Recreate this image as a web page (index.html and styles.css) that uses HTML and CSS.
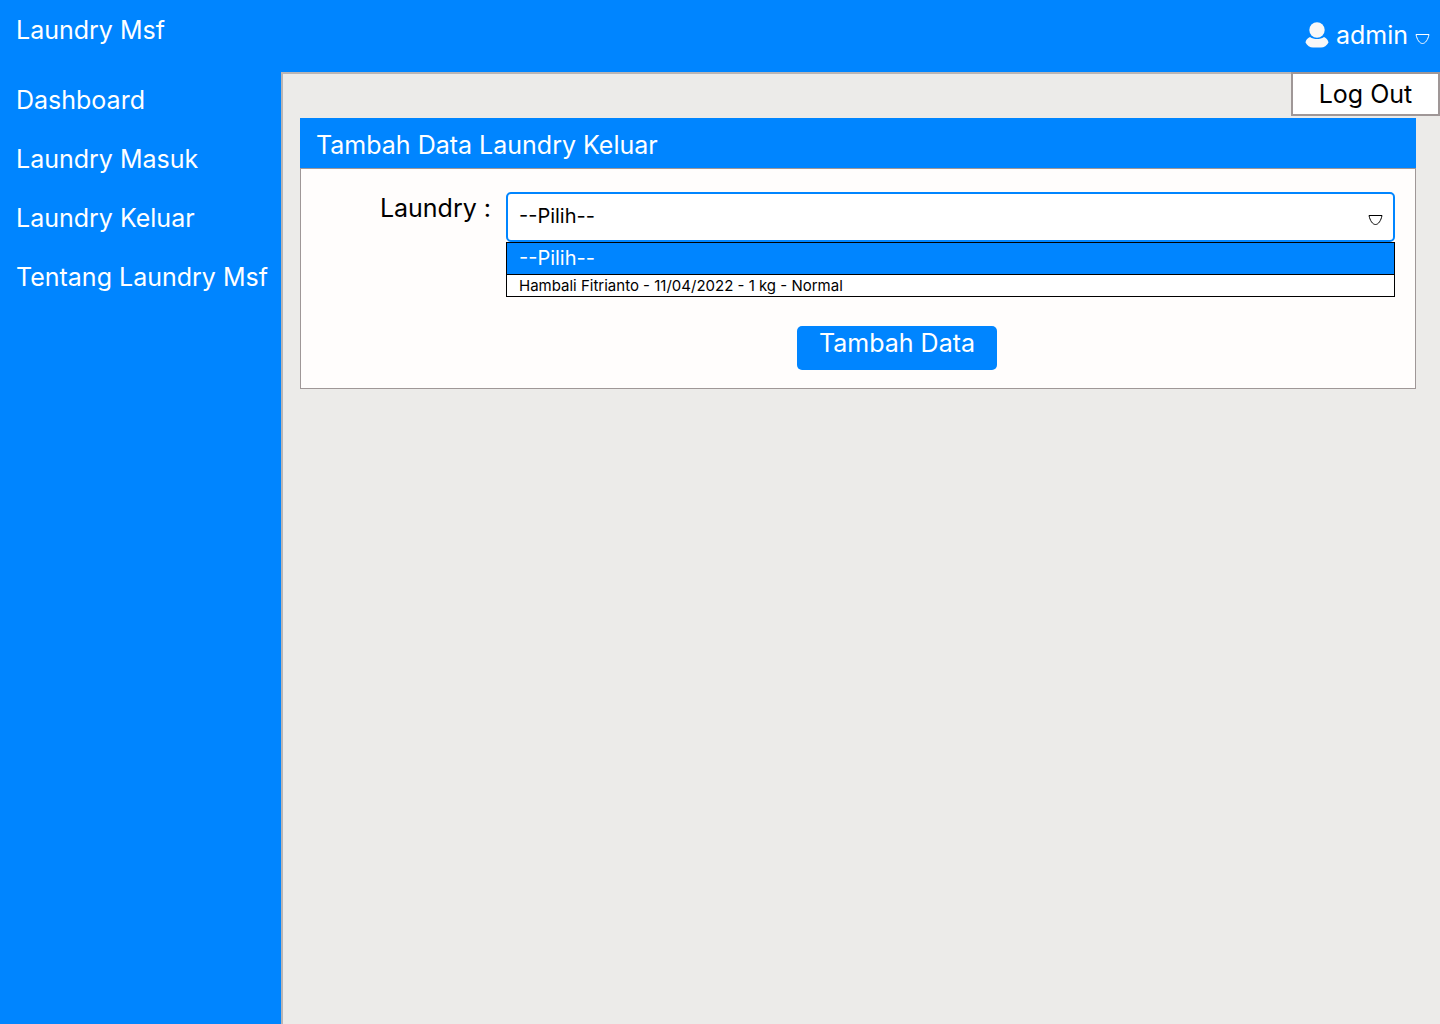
FILE: index.html
```html
<!DOCTYPE html>
<html lang="id">
<head>
  <meta charset="utf-8">
  <meta name="viewport" content="width=device-width, initial-scale=1">
  <title>Laundry Msf</title>
  <link rel="stylesheet" href="styles.css">
</head>
<body>
  <header class="topbar">
    <a class="brand" href="#">Laundry Msf</a>
    <div class="account">
      <button class="account-toggle" type="button" aria-expanded="true">
        <svg class="user-icon" viewBox="0 0 24 26" aria-hidden="true">
          <path d="M5 15C2.500 16 .8 18.200.5 20.500C2 23.500 5 25.500 8 25.500H16C19 25.500 22 23.500 23.500 20.500C23 18.200 21.500 16 19 15C15 17.700 9 17.700 5 15Z"/>
          <circle cx="12" cy="8" r="7.700"/>
        </svg>
        <span class="account-name">admin</span>
        <svg class="caret" viewBox="0 0 15 12" aria-hidden="true">
          <path d="M1 1.500H14C13 6.500 10.500 10.500 7.500 10.500S2 6.500 1 1.500Z"/>
        </svg>
      </button>
      <button class="logout" type="button">Log Out</button>
    </div>
  </header>

  <div class="layout">
    <nav class="sidebar">
      <a href="#">Dashboard</a>
      <a href="#">Laundry Masuk</a>
      <a href="#">Laundry Keluar</a>
      <a href="#">Tentang Laundry Msf</a>
    </nav>

    <main class="content">
      <section class="card">
        <h1 class="card-title">Tambah Data Laundry Keluar</h1>
        <form class="card-body">
          <div class="field">
            <label class="field-label" for="laundry">Laundry :</label>
            <div class="picker">
              <div class="select-box">
                <select class="select" id="laundry">
                  <option>--Pilih--</option>
                  <option>Hambali Fitrianto - 11/04/2022 - 1 kg - Normal</option>
                </select>
                <svg class="caret select-caret" viewBox="0 0 15 12" aria-hidden="true">
                  <path d="M1 1.500H14C13 6.500 10.500 10.500 7.500 10.500S2 6.500 1 1.500Z"/>
                </svg>
              </div>
              <ul class="options" role="listbox" aria-label="Laundry">
                <li class="option option-active" role="option" aria-selected="true">--Pilih--</li>
                <li class="option" role="option" aria-selected="false">Hambali Fitrianto - 11/04/2022 - 1 kg - Normal</li>
              </ul>
            </div>
          </div>
          <div class="actions">
            <button class="submit" type="button">Tambah Data</button>
          </div>
        </form>
      </section>
    </main>
  </div>
</body>
</html>
```
FILE: styles.css
```css
* {
  box-sizing: border-box;
}

body {
  display: flex;
  flex-direction: column;
  min-height: 100vh;
  margin: 0;
  background: #0085ff;
  color: #000;
  font-family: Inter, "Liberation Sans", sans-serif;
  font-size: 25px;
  line-height: 30px;
}

a {
  color: #fff;
  text-decoration: none;
}

button,
select {
  margin: 0;
  padding: 0;
  border: 0;
  background: none;
  color: inherit;
  font: inherit;
}

.topbar {
  position: relative;
  display: flex;
  justify-content: space-between;
  height: 72px;
  padding: 15px 10px 0 16px;
  color: #fff;
}

.account {
  padding-top: 5px;
}

.account-toggle {
  display: flex;
  align-items: center;
  gap: 7px;
}

.user-icon {
  width: 24px;
  height: 26px;
  fill: #f8f8f8;
}

.caret {
  width: 15px;
  height: 12px;
  fill: none;
  stroke: currentColor;
  stroke-width: 1;
}

.account-toggle .caret {
  margin-top: 8px;
}

.logout {
  position: absolute;
  top: 72px;
  right: 0;
  width: 149px;
  height: 44px;
  border: 2px solid #9f9797;
  background: #fff;
  color: #000;
}

.layout {
  display: flex;
  flex: 1;
}

.sidebar {
  display: flex;
  flex: 0 0 281px;
  flex-direction: column;
  gap: 29px;
  padding: 13px 0 0 16px;
}

.content {
  flex: 1;
  padding: 44px 24px 44px 17px;
  border-top: 2px solid #b9b5b5;
  border-left: 2px solid #b9b5b5;
  background: #ecebe9;
}

.card-title {
  margin: 0;
  padding: 12px 16px 8px;
  background: #0085ff;
  color: #fff;
  font-size: 25px;
  font-weight: 400;
}

.card-body {
  padding: 23px 20px 18px;
  border: 1px solid #9f9797;
  background: #fffdfc;
}

.field {
  display: flex;
  gap: 15px;
}

.field-label {
  flex: 0 0 170px;
  padding-top: 1px;
  text-align: right;
}

.picker {
  flex: 1;
}

.select-box {
  position: relative;
}

.select {
  display: block;
  width: 100%;
  height: 50px;
  padding: 0 11px 2px;
  border: 2px solid #0085ff;
  border-radius: 5px;
  background: #fff;
  appearance: none;
  font-size: 20px;
}

.select-caret {
  position: absolute;
  top: 22px;
  right: 12px;
  pointer-events: none;
}

.options {
  margin: 0;
  padding: 0;
  border: 1px solid #000;
  background: #fff;
  list-style: none;
}

.option {
  padding: 1px 0 0 12px;
  font-size: 15px;
  line-height: 20px;
}

.option-active {
  padding-top: 0;
  border-bottom: 1px solid #000;
  background: #0085ff;
  color: #fff;
  font-size: 20px;
  line-height: 31px;
}

.actions {
  display: flex;
  justify-content: center;
  margin-top: 29px;
  padding-left: 78px;
}

.submit {
  width: 200px;
  height: 44px;
  padding-bottom: 10px;
  border-radius: 5px;
  background: #0085ff;
  color: #fff;
}
```
